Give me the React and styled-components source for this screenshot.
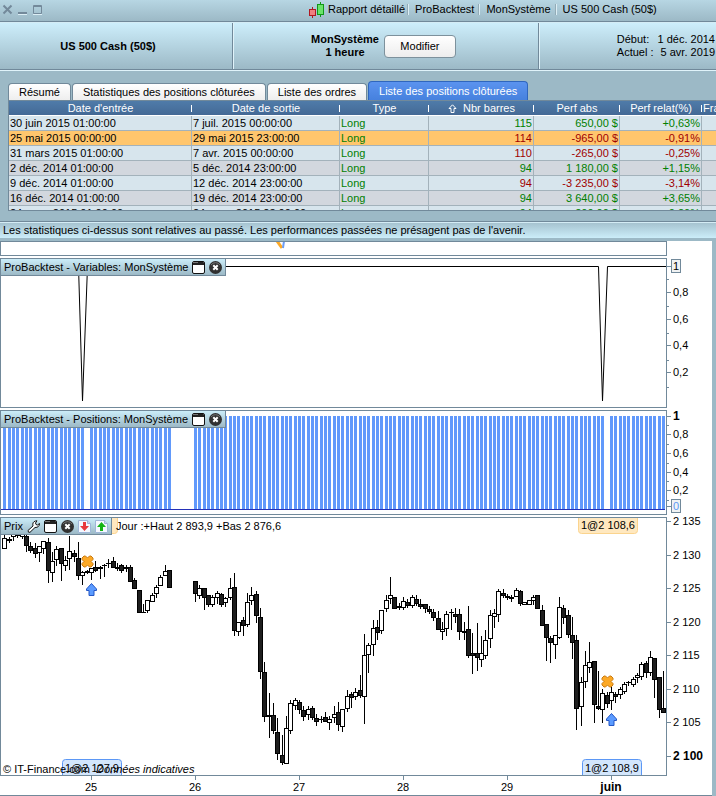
import React from "react";
import styled, { createGlobalStyle, css } from "styled-components";

const GlobalStyle = createGlobalStyle`
  * { box-sizing: border-box; }
  body {
    margin: 0;
    background: #9cb9c6;
    color: #000;
    font-family: "Liberation Sans", Arial, sans-serif;
    font-size: 11px;
    line-height: 13px;
  }
  button {
    font: inherit;
    color: inherit;
    padding: 0;
    border: 0;
    background: none;
  }
`;

const LINE = "#71899a";

const Window = styled.div`
  display: flex;
  flex-direction: column;
  overflow: hidden;
`;

/* ---------- title bar ---------- */

const TitleBar = styled.header`
  display: flex;
  align-items: center;
  height: 22px;
  padding: 0 4px 3px 2px;
  background: linear-gradient(#b7d6e3, #9cb9c6);
  border-bottom: 1px solid ${LINE};
`;

const WindowButtons = styled.div`
  display: flex;
  gap: 3px;
  width: 307px;
`;

const WindowButton = styled.button`
  display: flex;
  width: 12px;
  height: 12px;
`;

const Crumbs = styled.h1`
  display: flex;
  align-items: center;
  margin: 0;
  font-size: 11px;
  font-weight: normal;
  white-space: nowrap;
`;

const Crumb = styled.span`
  padding: 0 5px 0 6px;
  border-left: 1px solid #dceef5;
  line-height: 11px;
  box-shadow: -1px 0 0 #93abb6;

  &:first-of-type {
    padding: 0 3px;
    border: 0;
    box-shadow: none;
  }
`;

/* ---------- summary ---------- */

const Summary = styled.section`
  display: grid;
  grid-template-columns: 233px 306px 1fr;
  height: 48px;
  background: linear-gradient(#cdeefb, #9cb9c6);
  border-top: 1px solid #d4ecf5;
  border-bottom: 1px solid ${LINE};
`;

const SummaryCell = styled.div`
  display: flex;
  align-items: center;
  justify-content: ${(props) => props.$align || "center"};
  gap: 5px;
  border-right: ${(props) => (props.$last ? "0" : `1px solid ${LINE}`)};
  box-shadow: ${(props) => (props.$last ? "none" : "1px 0 0 #e0f3fa")};
  padding-right: ${(props) => props.$pad || 0}px;
  font-weight: ${(props) => (props.$last ? "normal" : "bold")};
  text-align: center;
`;

const ModifyButton = styled.button`
  width: 72px;
  height: 23px;
  border: 1px solid #7d919c;
  border-radius: 4px;
  background: linear-gradient(#fff, #ededed);
  font-weight: normal;
`;

const Dates = styled.dl`
  display: grid;
  grid-template-columns: auto auto;
  column-gap: 4px;
  margin: 0;
  text-align: left;
  white-space: nowrap;
`;

const DateLabel = styled.dt``;

const DateValue = styled.dd`
  margin: 0;
  text-align: right;
`;

/* ---------- tabs and table ---------- */

const Report = styled.section`
  padding: 10px 0 10px 8px;
  border-top: 1px solid #e0f3fa;
`;

const Tabs = styled.div`
  display: flex;
  align-items: flex-end;
  gap: 1px;
  height: 19px;
`;

const Tab = styled.button`
  height: 17px;
  padding: 0 10px;
  border: 1px solid ${LINE};
  border-bottom: 0;
  border-radius: 4px 4px 0 0;
  background: linear-gradient(#fff, #eee);
  white-space: nowrap;

  ${(props) =>
    props.$active &&
    css`
      height: 19px;
      color: #fff;
      border-color: #2f66bd;
      background: linear-gradient(#5b93ef, #4681de);
    `}
`;

const TableBox = styled.div`
  height: 111px;
  overflow: hidden;
  border: 1px solid ${LINE};
  border-right: 0;
`;

const Table = styled.table`
  width: 100%;
  table-layout: fixed;
  border-collapse: separate;
  border-spacing: 0;
`;

const HeadRow = styled.tr`
  height: 15px;
  background: linear-gradient(#4f7ba9, #436894);
  color: #fff;
`;

const HeadCell = styled.th`
  position: relative;
  padding: 0 1px;
  font-weight: normal;
  line-height: 14px;
  text-align: ${(props) => props.$align || "center"};
  white-space: nowrap;
  border-bottom: 1px solid #fff;

  &:not(:last-child)::after {
    content: "";
    position: absolute;
    right: 0;
    top: 4px;
    width: 1px;
    height: 7px;
    background: #fff;
  }
`;

const rowColors = {
  light: "#d7e5ed",
  grey: "#d2d7de",
  selected: "#ffc66d",
};

const Row = styled.tr`
  height: 15px;
  background: ${(props) => rowColors[props.$tone]};
`;

const valueColors = { up: "#007f00", down: "#a00000" };

const Cell = styled.td`
  padding: 0 1px;
  line-height: 14px;
  white-space: nowrap;
  border-right: 1px solid #a3b2bb;
  border-bottom: 1px solid #a3b2bb;
  text-align: ${(props) => (props.$number ? "right" : "left")};
  color: ${(props) => valueColors[props.$trend] || "#000"};

  &:last-child {
    border-right: 0;
  }
`;

const Notice = styled.p`
  margin: 0;
  height: 17px;
  padding: 2px 3px;
  border-top: 1px solid ${LINE};
  box-shadow: inset 0 1px 0 #d4ecf5;
  background: linear-gradient(#a3c0cd, #cbedf9);
  white-space: nowrap;
`;

/* ---------- charts ---------- */

const Charts = styled.main`
  display: flex;
  flex-direction: column;
  gap: 2px;
  margin-top: 3px;
  background: #fff;
  border-right: 4px solid #9cb9c6;
`;

const ChartRow = styled.section`
  position: relative;
  display: grid;
  grid-template-columns: 1fr 45px;
`;

const Plot = styled.div`
  border: 1px solid ${LINE};
  overflow: hidden;
`;

const Drawing = styled.svg`
  display: block;
  width: 100%;
  height: ${(props) => props.$height}px;
`;

const ChartText = styled.text`
  font-size: ${(props) => (props.$strong ? 12 : 11)}px;
  font-weight: ${(props) => (props.$strong ? "bold" : "normal")};
  font-style: ${(props) => (props.$italic ? "italic" : "normal")};
`;

const PanelTitle = styled.div`
  position: absolute;
  top: 0;
  left: 0;
  display: flex;
  align-items: center;
  gap: 4px;
  height: 18px;
  padding: 0 3px;
  border: 1px solid ${LINE};
  background: linear-gradient(#cbedf9, #9cb9c6);
  white-space: nowrap;
`;

const IconButton = styled.button`
  display: flex;
  width: 13px;
  height: 13px;
`;

const DayRange = styled.span`
  position: absolute;
  top: 3px;
  left: 116px;
`;

const TimeAxis = styled.footer`
  margin-top: -2px;
  border-bottom: 1px solid ${LINE};
`;

/* ---------- data ---------- */

const columns = [
  { label: "Date d'entrée", width: 183 },
  { label: "Date de sortie", width: 148 },
  { label: "Type", width: 89 },
  { label: "Nbr barres", width: 105, sorted: true },
  { label: "Perf abs", width: 86 },
  { label: "Perf relat(%)", width: 82 },
  { label: "Frais", align: "left" },
];

const positions = [
  ["30 juin 2015 01:00:00", "7 juil. 2015 00:00:00", "115", "650,00 $", "+0,63%", "up", "light"],
  ["25 mai 2015 00:00:00", "29 mai 2015 23:00:00", "114", "-965,00 $", "-0,91%", "down", "selected"],
  ["31 mars 2015 01:00:00", "7 avr. 2015 00:00:00", "110", "-265,00 $", "-0,25%", "down", "light"],
  ["2 déc. 2014 01:00:00", "5 déc. 2014 23:00:00", "94", "1 180,00 $", "+1,15%", "up", "grey"],
  ["9 déc. 2014 01:00:00", "12 déc. 2014 23:00:00", "94", "-3 235,00 $", "-3,14%", "down", "light"],
  ["16 déc. 2014 01:00:00", "19 déc. 2014 23:00:00", "94", "3 640,00 $", "+3,65%", "up", "grey"],
  ["24 mars 2015 01:00:00", "24 mars 2015 23:00:00", "94", "200,00 $", "+0,20%", "up", "light"],
];

// hour index (0 = 25 mai), high, body top, body bottom, low, 1 when the bar closes lower
const candles = [
  [-20, 535, 538, 548, 548, 0], [-19, 537, 539, 540, 542, 1], [-18, 532, 533, 536, 540, 0],
  [-17, 530, 532, 535, 537, 0], [-16, 530, 532, 536, 538, 0], [-15, 534, 536, 545, 551, 1],
  [-14, 542, 546, 550, 552, 1], [-13, 543, 548, 553, 557, 1], [-12, 546, 546, 552, 561, 0],
  [-11, 541, 541, 548, 553, 0], [-10, 538, 542, 570, 582, 1], [-9, 552, 561, 572, 581, 0],
  [-8, 546, 549, 559, 565, 0], [-7, 548, 548, 563, 580, 1], [-6, 556, 560, 565, 570, 0],
  [-5, 536, 551, 558, 569, 0], [-4, 550, 553, 556, 561, 1], [-3, 542, 558, 575, 579, 1],
  [-2, 571, 572, 575, 584, 0], [-1, 570, 571, 572, 573, 1], [0, 568, 568, 572, 579, 0],
  [1, 561, 567, 570, 571, 1], [2, 566, 567, 568, 578, 1], [3, 564, 565, 565, 576, 1],
  [4, 559, 563, 563, 567, 1], [5, 557, 561, 567, 567, 1], [6, 563, 567, 568, 570, 1],
  [7, 564, 565, 570, 572, 1], [8, 565, 567, 568, 571, 1], [9, 565, 567, 581, 581, 1],
  [10, 578, 580, 588, 588, 1], [11, 590, 590, 612, 612, 1], [12, 604, 612, 612, 612, 1],
  [13, 600, 600, 610, 612, 0], [14, 593, 595, 601, 601, 0], [15, 585, 587, 593, 597, 0],
  [16, 575, 577, 585, 585, 0], [17, 565, 571, 575, 575, 0], [18, 570, 570, 587, 587, 1],
  [24, 581, 581, 593, 601, 1], [25, 585, 588, 595, 598, 0], [26, 588, 588, 597, 609, 1],
  [27, 595, 595, 604, 606, 1], [28, 595, 597, 604, 606, 0], [29, 591, 593, 597, 603, 0],
  [30, 593, 594, 604, 606, 1], [31, 597, 598, 602, 606, 0], [32, 578, 588, 597, 599, 0],
  [33, 573, 587, 630, 635, 1], [34, 622, 622, 631, 635, 0], [35, 617, 620, 625, 635, 1],
  [36, 593, 602, 624, 626, 0], [37, 587, 595, 600, 604, 0], [38, 591, 594, 615, 622, 1],
  [39, 608, 617, 671, 678, 1], [40, 662, 672, 716, 721, 1], [41, 693, 715, 716, 737, 1],
  [42, 703, 715, 730, 733, 1], [43, 718, 732, 753, 759, 1], [44, 735, 755, 762, 764, 1],
  [45, 716, 728, 763, 763, 0], [46, 700, 703, 730, 733, 0], [47, 698, 700, 705, 709, 0],
  [48, 700, 702, 709, 713, 1], [49, 706, 710, 716, 720, 1], [50, 706, 709, 714, 719, 0],
  [51, 706, 708, 717, 719, 1], [52, 714, 718, 721, 725, 1], [53, 716, 719, 719, 722, 1],
  [54, 712, 717, 721, 721, 1], [55, 716, 719, 722, 729, 0], [56, 706, 714, 717, 722, 0],
  [57, 702, 712, 724, 730, 1], [58, 709, 709, 726, 731, 0], [59, 690, 696, 708, 711, 0],
  [60, 692, 694, 697, 707, 1], [61, 688, 692, 696, 699, 0], [62, 675, 690, 695, 697, 1],
  [63, 634, 655, 696, 723, 0], [64, 643, 645, 654, 672, 0], [65, 620, 628, 644, 655, 0],
  [66, 620, 627, 632, 639, 1], [67, 610, 610, 630, 633, 0], [68, 595, 600, 608, 611, 0],
  [69, 577, 595, 598, 603, 0], [70, 597, 597, 608, 608, 1], [71, 603, 606, 607, 609, 1],
  [72, 597, 601, 607, 609, 0], [73, 599, 602, 605, 607, 1], [74, 595, 597, 605, 607, 0],
  [75, 595, 599, 603, 605, 1], [76, 599, 604, 606, 608, 1], [77, 604, 604, 608, 612, 1],
  [78, 606, 609, 611, 613, 1], [79, 609, 612, 617, 620, 1], [80, 611, 618, 629, 629, 1],
  [81, 622, 629, 631, 639, 0], [82, 611, 614, 628, 635, 0], [83, 609, 612, 612, 629, 1],
  [84, 608, 614, 616, 622, 1], [85, 609, 614, 631, 639, 1], [86, 622, 631, 632, 639, 1],
  [87, 606, 629, 655, 657, 1], [88, 633, 653, 655, 673, 1], [89, 623, 653, 657, 670, 1],
  [90, 636, 653, 659, 666, 0], [91, 630, 640, 655, 658, 0], [92, 610, 615, 638, 647, 0],
  [93, 609, 613, 616, 627, 0], [94, 589, 591, 614, 621, 0], [95, 589, 593, 595, 597, 1],
  [96, 594, 596, 597, 599, 1], [97, 595, 597, 598, 601, 1], [98, 588, 590, 596, 596, 0],
  [99, 590, 591, 603, 605, 1], [100, 602, 602, 604, 604, 0], [101, 600, 600, 604, 604, 0],
  [102, 595, 597, 600, 604, 0], [103, 595, 595, 608, 608, 1], [104, 605, 610, 625, 625, 1],
  [105, 624, 624, 637, 660, 1], [106, 636, 638, 642, 662, 1], [107, 635, 635, 644, 658, 0],
  [108, 597, 607, 637, 638, 0], [109, 605, 608, 617, 623, 1], [110, 610, 615, 634, 637, 1],
  [111, 617, 635, 642, 658, 1], [112, 635, 640, 708, 729, 1], [113, 677, 682, 706, 725, 0],
  [114, 651, 665, 681, 687, 0], [115, 642, 662, 667, 672, 0], [116, 661, 661, 704, 722, 1],
  [117, 671, 706, 708, 709, 1], [118, 689, 693, 709, 722, 0], [119, 692, 695, 703, 707, 1],
  [120, 687, 692, 700, 709, 0], [121, 692, 694, 696, 702, 1], [122, 687, 689, 694, 698, 0],
  [123, 682, 684, 691, 693, 0], [124, 681, 682, 682, 685, 1], [125, 677, 679, 684, 686, 0],
  [126, 673, 675, 677, 682, 0], [127, 662, 664, 676, 679, 0], [128, 661, 663, 672, 677, 1],
  [129, 651, 657, 672, 675, 0], [130, 658, 658, 679, 697, 1], [131, 677, 677, 709, 717, 1],
  [132, 671, 708, 712, 712, 1],
];

// one trading day is 24 bars over 104 pixels
const barX = (index) => Math.round(91 + (index * 13) / 3);

const openHours = candles.map((c) => c[0]).filter((i) => i !== -1 && i !== 119);

/* ---------- icons ---------- */

const CandleLogo = () => (
  <svg width="16" height="17" viewBox="0 0 16 17" aria-hidden="true">
    <path d="M3.5 6v11" stroke="#b01822" />
    <rect x="0.5" y="8.5" width="6" height="6" fill="#f08080" stroke="#b01822" />
    <path d="M11.5 1v15" stroke="#109818" />
    <rect x="8.5" y="3.5" width="6" height="10" fill="#6ae46a" stroke="#109818" />
  </svg>
);

const DetachIcon = () => (
  <svg width="13" height="13" viewBox="0 0 13 13" aria-hidden="true">
    <rect x="0.5" y="0.5" width="12" height="12" rx="1.5" fill="#fff" stroke="#111" />
    <path d="M1 4V2q0-1 1-1h9q1 0 1 1v2z" fill="#222" />
    <path d="M1 1.500h5" stroke="#777" />
  </svg>
);

const CloseIcon = () => (
  <svg width="13" height="13" viewBox="0 0 13 13" aria-hidden="true">
    <circle cx="6.5" cy="6.5" r="6.5" fill="#303030" />
    <path d="M2 4a5.500 5.500 0 0 1 9 0" fill="none" stroke="#777" />
    <path d="M4.300 4.300l4.400 4.400m0-4.400l-4.400 4.400" stroke="#fff" strokeWidth="2" />
  </svg>
);

const WrenchIcon = () => (
  <svg width="13" height="13" viewBox="0 0 13 13" aria-hidden="true">
    <path
      d="M1 10.500L6 6Q5 2 8.500 1L10 .8 8.500 3l.5 1.500 1.500.5L12.500 3.500q0 4-4.500 4L3 12.300Q1 13 1 10.500z"
      fill="#fff"
      stroke="#111"
    />
  </svg>
);

const OrderIcon = ({ color, up }) => (
  <svg width="13" height="13" viewBox="0 0 13 13" aria-hidden="true">
    <path d="M.5.500h9l3 3v9H.500z" fill="#f4f8ff" stroke="#9fb6d8" />
    <path d="M9.500.500v3h3" fill="#c8d8ef" stroke="#9fb6d8" />
    <path
      d="M5 2h3v4h3l-4.500 5L2 6h3z"
      fill={color}
      transform={up ? "rotate(180 6.500 6.500)" : undefined}
    />
  </svg>
);

const SortArrow = styled.svg`
  display: inline-block;
  vertical-align: -1px;
  margin-right: 6px;
`;

/* ---------- chart parts ---------- */

const Candle = ({ bar: [index, high, top, bottom, low, down] }) => {
  const x = barX(index);
  return (
    <g>
      <rect x={x} y={high} width="1" height={low - high + 1} fill="#000" />
      <rect x={x - 2} y={top} width="5" height={bottom - top + 1} fill="#000" />
      {bottom - top > 1 && (
        <rect
          x={x - 1}
          y={top + 1}
          width="3"
          height={bottom - top - 1}
          fill={down ? "#1e1e1e" : "#fff"}
        />
      )}
    </g>
  );
};

const ExitMark = ({ x, y }) => (
  <path
    transform={`translate(${x} ${y})`}
    d="M0 2L2 0l1.500 0L5.500 2 7.500 0 9 0l2 2v1.500L9 5.500l2 2V9L9 11H7.500L5.500 9l-2 2H2L0 9V7.500l2-2-2-2z"
    fill="#fca926"
    stroke="#c97a10"
  />
);

const EntryArrow = ({ x, y }) => (
  <path
    transform={`translate(${x} ${y})`}
    d="M5.500.500L10.500 6v1.500h-2.500v5H3v-5H.5V6z"
    fill="#5b9bff"
    stroke="#2457c5"
  />
);

const Flag = ({ x, y, text, exit }) => (
  <g>
    <rect
      x={x + 0.5}
      y={y + 0.5}
      width="59"
      height="19"
      rx="3"
      fill={exit ? "#ffe8bf" : "#d3e6fc"}
      stroke={exit ? "#fbd48e" : "#5b97f5"}
    />
    {text && (
      <ChartText x={x + 3} y={exit ? y + 15 : y + 13}>
        {text}
      </ChartText>
    )}
  </g>
);

const Axis = ({ height, top, majors, minors = [], boxed, strong }) => (
  <Drawing $height={height}>
    <g transform={`translate(0 ${-top})`}>
      <g fill={LINE} shapeRendering="crispEdges">
        {majors.map(([y]) => (
          <rect key={y} x="0" y={y} width="4" height="1" />
        ))}
        {minors.map((y) => (
          <rect key={y} x="0" y={y} width="2" height="1" />
        ))}
      </g>
      {majors.map(([y, label]) => {
        const isBoxed = boxed && boxed.label === label;
        return (
          <g key={y}>
            {isBoxed && (
              <rect x="4.5" y={y - 6.5} width="9" height="13" fill="#f0f2f3" stroke={LINE} />
            )}
            <ChartText
              x="6"
              y={y + 4}
              fill={isBoxed ? boxed.color : "#000"}
              $strong={strong === label}
            >
              {label}
            </ChartText>
          </g>
        );
      })}
    </g>
  </Drawing>
);

const PanelButtons = () => (
  <>
    <IconButton aria-label="Détacher">
      <DetachIcon />
    </IconButton>
    <IconButton aria-label="Fermer">
      <CloseIcon />
    </IconButton>
  </>
);

const VariablesChart = () => (
  <ChartRow>
    <Plot>
      <Drawing $height={148}>
        <g transform="translate(-1 -259)" fill="none" stroke="#000">
          <path d="M0 266.500H78.500L82.500 401 87.500 266.500H598.500L602.500 401 607.500 266.500H667" />
        </g>
      </Drawing>
    </Plot>
    <Axis
      height={150}
      top={258}
      majors={[[266, "1"], [292, "0,8"], [319, "0,6"], [345, "0,4"], [372, "0,2"]]}
      minors={[279, 306, 333, 360, 387]}
      boxed={{ label: "1", color: "#000" }}
    />
    <PanelTitle>
      ProBacktest - Variables: MonSystème
      <PanelButtons />
    </PanelTitle>
  </ChartRow>
);

const PositionsChart = () => (
  <ChartRow>
    <Plot>
      <Drawing $height={103}>
        <g transform="translate(-1 -411)" shapeRendering="crispEdges">
          {openHours.map((i) => (
            <rect key={i} x={barX(i) - 1} y="416" width="3" height="93" fill="#6199fb" />
          ))}
          <rect x="0" y="509" width="100%" height="1" fill="#2430b8" />
        </g>
      </Drawing>
    </Plot>
    <Axis
      height={105}
      top={410}
      majors={[[416, "1"], [434, "0,8"], [453, "0,6"], [472, "0,4"], [490, "0,2"], [506, "0"]]}
      minors={[425, 444, 463, 481, 500]}
      boxed={{ label: "0", color: "#5b97f5" }}
      strong="1"
    />
    <PanelTitle>
      ProBacktest - Positions: MonSystème
      <PanelButtons />
    </PanelTitle>
  </ChartRow>
);

const PriceChart = () => (
  <ChartRow>
    <Plot>
      <Drawing $height={257}>
        <g transform="translate(-1 -518)">
          <Flag x={58} y={514} exit />
          <Flag x={578} y={514} text="1@2 108,6" exit />
          <Flag x={62} y={759} text="1@2 127,9" />
          <Flag x={582} y={759} text="1@2 108,9" />
          <g shapeRendering="crispEdges">
            {candles.map((bar) => (
              <Candle key={bar[0]} bar={bar} />
            ))}
          </g>
          <ExitMark x={82} y={556} />
          <ExitMark x={602} y={676} />
          <EntryArrow x={86} y={583} />
          <EntryArrow x={606} y={713} />
          <ChartText x="3" y="773">© IT-Finance.com</ChartText>
          <ChartText x="96" y="773" $italic>Données indicatives</ChartText>
        </g>
      </Drawing>
    </Plot>
    <Axis
      height={259}
      top={517}
      majors={[
        [521, "2 135"],
        [555, "2 130"],
        [588, "2 125"],
        [622, "2 120"],
        [655, "2 115"],
        [689, "2 110"],
        [722, "2 105"],
        [756, "2 100"],
      ]}
      strong="2 100"
    />
    <PanelTitle>
      Prix
      <IconButton aria-label="Configurer">
        <WrenchIcon />
      </IconButton>
      <PanelButtons />
      <IconButton aria-label="Vendre">
        <OrderIcon color="#e8383c" />
      </IconButton>
      <IconButton aria-label="Acheter">
        <OrderIcon color="#14b414" up />
      </IconButton>
    </PanelTitle>
    <DayRange>Jour :+Haut 2 893,9 +Bas 2 876,6</DayRange>
  </ChartRow>
);

const days = ["25", "26", "27", "28", "29", "juin"];

const App = () => (
  <Window>
    <GlobalStyle />
    <TitleBar>
      <WindowButtons>
        <WindowButton aria-label="Fermer la fenêtre">
          <svg width="12" height="12" viewBox="0 0 12 12">
            <path d="M1.500 2.500l8 8m0-8l-8 8" stroke="#73899a" strokeWidth="2" />
          </svg>
        </WindowButton>
        <WindowButton aria-label="Réduire">
          <svg width="12" height="12" viewBox="0 0 12 12">
            <path d="M1 10h9" stroke="#73899a" strokeWidth="2" />
            <path d="M1 11.500h9" stroke="#dceef5" />
          </svg>
        </WindowButton>
        <WindowButton aria-label="Agrandir">
          <svg width="12" height="12" viewBox="0 0 12 12">
            <path d="M1.500 2.500h8v8h-8zM1 3.500h9" fill="none" stroke="#73899a" />
            <path d="M1 11.500h9" stroke="#dceef5" />
          </svg>
        </WindowButton>
      </WindowButtons>
      <Crumbs>
        <CandleLogo />
        <Crumb>Rapport détaillé</Crumb>
        <Crumb>ProBacktest</Crumb>
        <Crumb>MonSystème</Crumb>
        <Crumb>US 500 Cash (50$)</Crumb>
      </Crumbs>
    </TitleBar>

    <Summary>
      <SummaryCell $pad={16}>US 500 Cash (50$)</SummaryCell>
      <SummaryCell $pad={4}>
        <div>
          MonSystème
          <br />1 heure
        </div>
        <ModifyButton>Modifier</ModifyButton>
      </SummaryCell>
      <SummaryCell $align="flex-end" $pad={1} $last>
        <Dates>
          <DateLabel>Début:</DateLabel>
          <DateValue>1 déc. 2014</DateValue>
          <DateLabel>Actuel :</DateLabel>
          <DateValue>5 avr. 2019</DateValue>
        </Dates>
      </SummaryCell>
    </Summary>

    <Report>
      <Tabs role="tablist">
        <Tab role="tab">Résumé</Tab>
        <Tab role="tab">Statistiques des positions clôturées</Tab>
        <Tab role="tab">Liste des ordres</Tab>
        <Tab role="tab" aria-selected="true" $active>
          Liste des positions clôturées
        </Tab>
      </Tabs>
      <TableBox>
        <Table>
          <colgroup>
            {columns.map((column) => (
              <col key={column.label} width={column.width} />
            ))}
          </colgroup>
          <thead>
            <HeadRow>
              {columns.map((column) => (
                <HeadCell key={column.label} $align={column.align}>
                  {column.sorted && (
                    <SortArrow width="9" height="9" viewBox="0 0 9 9" aria-hidden="true">
                      <path d="M4.500.800L8 4.500H6v4H3v-4H1z" fill="none" stroke="#fff" />
                    </SortArrow>
                  )}
                  {column.label}
                </HeadCell>
              ))}
            </HeadRow>
          </thead>
          <tbody>
            {positions.map(([entry, exit, bars, perf, relative, trend, tone]) => (
              <Row key={entry} $tone={tone}>
                <Cell>{entry}</Cell>
                <Cell>{exit}</Cell>
                <Cell $trend="up">Long</Cell>
                <Cell $number $trend={trend}>{bars}</Cell>
                <Cell $number $trend={trend}>{perf}</Cell>
                <Cell $number $trend={trend}>{relative}</Cell>
                <Cell />
              </Row>
            ))}
          </tbody>
        </Table>
      </TableBox>
    </Report>

    <Notice>
      Les statistiques ci-dessus sont relatives au passé. Les performances passées ne présagent pas de l'avenir.
    </Notice>

    <Charts>
      <ChartRow>
        <Plot>
          <Drawing $height={13}>
            <path d="M276-1l5 7" stroke="#fca926" strokeWidth="3" />
            <path d="M283-1l-1 7" stroke="#6c9cf5" strokeWidth="2" />
          </Drawing>
        </Plot>
      </ChartRow>
      <VariablesChart />
      <PositionsChart />
      <PriceChart />
      <TimeAxis>
        <Drawing $height={19}>
          {days.map((day, i) => (
            <g key={day}>
              <rect x={91 + i * 104} y="0" width="1" height="4" fill={LINE} />
              <ChartText
                x={91 + i * 104}
                y="15"
                textAnchor="middle"
                $strong={day === "juin"}
              >
                {day}
              </ChartText>
            </g>
          ))}
        </Drawing>
      </TimeAxis>
    </Charts>
  </Window>
);

export default App;
